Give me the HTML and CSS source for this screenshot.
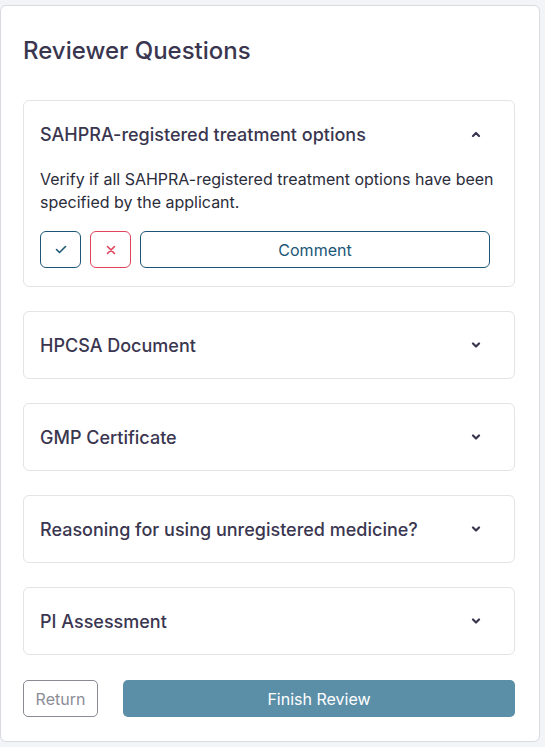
FILE: index.html
```html
<!DOCTYPE html>
<html>
<head>
<meta charset="utf-8">
<link rel="stylesheet" href="styles.css">
</head>
<body>
<div class="card">
  <h2 class="heading">Reviewer Questions</h2>
  <div class="list">
    <div class="item open">
      <div class="item-head">
        <span class="item-title">SAHPRA-registered treatment options</span>
        <svg class="chev" width="10" height="6" viewBox="0 0 10 6"><path d="M2 5 L5 2 L8 5" fill="none" stroke="#3b3650" stroke-width="2.2" stroke-linecap="round" stroke-linejoin="round"/></svg>
      </div>
      <p class="desc">Verify if all SAHPRA-registered treatment options have been specified by the applicant.</p>
      <div class="actions">
        <button class="btn-icon ok"><svg width="12" height="9" viewBox="0 0 12 9"><path d="M1.5 4.5 L4.5 7.5 L10.5 1.5" fill="none" stroke="#1c5677" stroke-width="1.6" stroke-linecap="round" stroke-linejoin="round"/></svg></button>
        <button class="btn-icon no"><svg width="10" height="10" viewBox="0 0 10 10"><path d="M1.5 1.5 L8.5 8.5 M8.5 1.5 L1.5 8.5" fill="none" stroke="#e0435a" stroke-width="1.6" stroke-linecap="round"/></svg></button>
        <button class="btn-comment">Comment</button>
      </div>
    </div>
    <div class="item">
      <div class="item-head">
        <span class="item-title">HPCSA Document</span>
        <svg class="chev" width="10" height="6" viewBox="0 0 10 6"><path d="M2 1.5 L5 4.5 L8 1.5" fill="none" stroke="#3b3650" stroke-width="2.2" stroke-linecap="round" stroke-linejoin="round"/></svg>
      </div>
    </div>
    <div class="item">
      <div class="item-head">
        <span class="item-title">GMP Certificate</span>
        <svg class="chev" width="10" height="6" viewBox="0 0 10 6"><path d="M2 1.5 L5 4.5 L8 1.5" fill="none" stroke="#3b3650" stroke-width="2.2" stroke-linecap="round" stroke-linejoin="round"/></svg>
      </div>
    </div>
    <div class="item">
      <div class="item-head">
        <span class="item-title">Reasoning for using unregistered medicine?</span>
        <svg class="chev" width="10" height="6" viewBox="0 0 10 6"><path d="M2 1.5 L5 4.5 L8 1.5" fill="none" stroke="#3b3650" stroke-width="2.2" stroke-linecap="round" stroke-linejoin="round"/></svg>
      </div>
    </div>
    <div class="item">
      <div class="item-head">
        <span class="item-title">PI Assessment</span>
        <svg class="chev" width="10" height="6" viewBox="0 0 10 6"><path d="M2 1.5 L5 4.5 L8 1.5" fill="none" stroke="#3b3650" stroke-width="2.2" stroke-linecap="round" stroke-linejoin="round"/></svg>
      </div>
    </div>
  </div>
  <div class="footer">
    <button class="btn-return">Return</button>
    <button class="btn-finish">Finish Review</button>
  </div>
</div>
</body>
</html>
```
FILE: styles.css
```css
* { box-sizing: border-box; }
html, body { margin: 0; padding: 0; }
body {
  background: #f3f4f8;
  font-family: Inter, "Noto Sans", sans-serif;
  width: 545px;
  height: 747px;
}
.card {
  margin: 5px 0 0 0;
  width: 540px;
  height: 737px;
  background: #fff;
  border: 1px solid #d9dbe0;
  border-radius: 6px;
  padding: 0 24px 0 22px;
}
.heading {
  margin: 30px 0 0 0;
  font-size: 24px;
  font-weight: 500;
  line-height: 30px;
  color: #3a364f;
}
.list {
  margin-top: 34px;
  display: flex;
  flex-direction: column;
  gap: 24px;
}
.item {
  border: 1px solid #e3e4e8;
  border-radius: 6px;
  padding: 0 24px 0 16px;
}
.item-head {
  height: 66px;
  display: flex;
  align-items: center;
  justify-content: space-between;
}
.item-title {
  font-size: 18px;
  font-weight: 500;
  color: #3a364f;
}
.chev { display: block; margin-right: 9px; }
.desc {
  margin: 1px -10px 0 0;
  font-size: 16px;
  line-height: 23px;
  color: #2b2d3a;
}
.actions {
  display: flex;
  gap: 9px;
  margin-top: 17px;
  margin-bottom: 18px;
}
button { font-family: inherit; cursor: pointer; }
.btn-icon {
  width: 41px;
  height: 37px;
  background: #fff;
  border-radius: 6px;
  display: flex;
  align-items: center;
  justify-content: center;
  padding: 0;
}
.ok { border: 1px solid #1c5677; }
.no { border: 1px solid #e0435a; }
.btn-comment {
  flex: 1;
  height: 37px;
  background: #fff;
  border: 1px solid #1c5677;
  border-radius: 6px;
  color: #1c5677;
  font-size: 16px;
}
.footer {
  display: flex;
  gap: 25px;
  margin-top: 25px;
}
.btn-return {
  width: 75px;
  height: 37px;
  background: #fff;
  border: 1px solid #8a8a92;
  border-radius: 5px;
  color: #8c8c96;
  font-size: 16px;
}
.btn-finish {
  flex: 1;
  height: 37px;
  background: #5b8fa8;
  border: none;
  border-radius: 5px;
  color: #fff;
  font-size: 16px;
}
```
